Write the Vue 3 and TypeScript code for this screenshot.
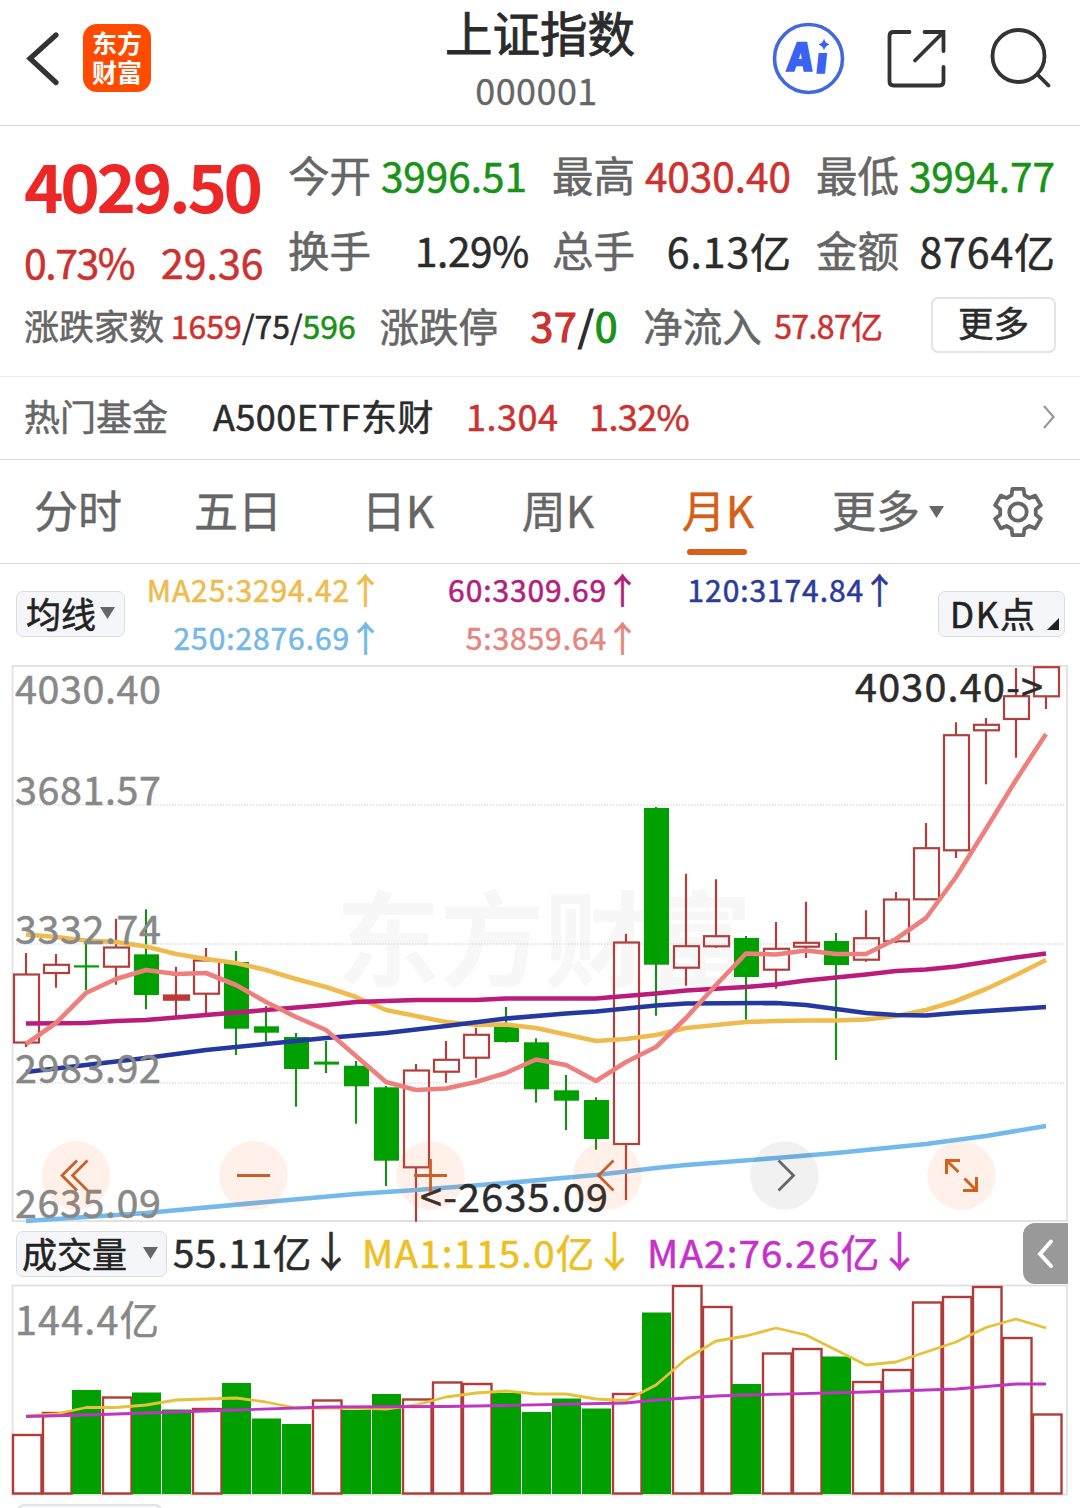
<script setup lang="ts">
interface Stat { label: string; value: string; tone: string }
type Candle = [up: number, high: number, top: number, bottom: number, low: number]

const stats: Stat[] = [
  { label: '今开', value: '3996.51', tone: 'down' },
  { label: '最高', value: '4030.40', tone: 'up' },
  { label: '最低', value: '3994.77', tone: 'down' },
  { label: '换手', value: '1.29%', tone: 'ink percent' },
  { label: '总手', value: '6.13亿', tone: 'ink amount' },
  { label: '金额', value: '8764亿', tone: 'ink amount' },
]

const tabs = ['分时', '五日', '日K', '周K', '月K']
const activeTab = '月K'

const averages = [
  { text: 'MA25:3294.42', color: '#efbb4c' },
  { text: '60:3309.69', color: '#b3207c' },
  { text: '120:3174.84', color: '#2a3b9c' },
  { text: '250:2876.69', color: '#74b8e8' },
  { text: '5:3859.64', color: '#e4857e' },
]

const cx = (i: number): number => 26 + 30 * i

const candles: Candle[] = [
  [1, 953, 974, 1042.5, 1047], [1, 954, 964.3, 973, 987.7], [0, 943, 965.3, 967.5, 990.3],
  [1, 918.7, 947, 966.7, 984.7], [0, 909.3, 954.3, 995, 1009.3], [1, 966.7, 995, 999.7, 1016.7],
  [1, 948, 960, 993.7, 1016], [0, 951, 962, 1028.7, 1055], [0, 1006, 1026.3, 1032.7, 1041.7],
  [0, 1033, 1037, 1069, 1106.7], [0, 1041, 1061.6, 1064.6, 1073], [0, 1061, 1065.7, 1086.3, 1123.7],
  [0, 1086, 1087.3, 1160.7, 1186], [1, 1064, 1070, 1167.3, 1221.7], [1, 1041, 1059.3, 1071.7, 1082.7],
  [1, 1027.7, 1034.3, 1057.7, 1077.7], [0, 1007, 1026, 1042, 1042.7], [0, 1038.3, 1042.3, 1089.3, 1102.7],
  [0, 1075, 1090.3, 1100.7, 1130], [0, 1097.3, 1100, 1139, 1149.7], [1, 933.7, 942, 1144, 1200],
  [0, 807, 808, 964.7, 1015.7], [1, 873.7, 945.7, 967.7, 985.7], [1, 879.3, 935.7, 946.3, 947.7],
  [0, 936, 938, 977, 1019.7], [1, 922, 948.3, 969.7, 988.7], [1, 901.7, 942.3, 946.7, 958],
  [0, 933, 941, 965, 1060], [1, 910.3, 937.7, 959.7, 961.7], [1, 892, 899, 941.3, 943],
  [1, 823, 847.7, 899.3, 900.3], [1, 722.3, 734.7, 850.3, 858], [1, 718, 724.3, 730.3, 784.3],
  [1, 668, 695.7, 719, 757.7], [1, 667, 666.7, 696.3, 709],
]

const priceLines = [
  { color: '#73b9ec', points: '26,1221 146,1213 266,1202 356,1194 416,1190 506,1183 596,1175 656,1168 686,1165 776,1158 836,1153 926,1144 986,1136 1046,1126' },
  { color: '#f0bb4e', points: '26,934.5 56,937 86,940.5 116,942 146,946.5 176,954 206,959 236,963 266,970 296,979 326,987 356,997 386,1010 416,1016 446,1022 476,1025 506,1024.5 536,1028 566,1034.5 596,1041 626,1039 656,1035 686,1028 716,1025 746,1022 776,1021 806,1020.5 836,1020.5 866,1019.5 896,1016 926,1010 956,1001 986,989 1016,975 1046,960' },
  { color: '#bb1b7b', points: '26,1023.5 86,1023 116,1021 146,1020 206,1015 266,1010 326,1005 356,1002 386,1001 416,1000 476,1000 506,998.5 596,998.5 626,996 656,993.5 686,990.5 746,987 776,984.5 806,980.5 836,977.5 866,974.5 896,971 926,969.5 956,966.5 986,962 1016,957.5 1046,953.5' },
  { color: '#2438a0', points: '26,1072 86,1065 146,1058 206,1050 266,1044 326,1038 386,1033 446,1026 506,1018.5 566,1013.5 596,1011.5 626,1008.5 656,1005.5 686,1003.5 776,1003 806,1005 836,1009 866,1013 896,1015 926,1015.5 956,1013 1046,1007' },
  { color: '#ed807c', points: '26,1044 56,1023 86,993 116,979 146,970 176,974 206,973 236,985 266,1002 296,1017 326,1030 356,1056 386,1082 416,1090 446,1088.5 476,1082 506,1073 536,1059.5 566,1065 596,1081 626,1062 656,1047 686,1018 716,985 746,953.5 776,954.5 806,950.5 836,954 866,954 896,939 926,918 956,877 986,829 1016,780 1046,734' },
]

const axis: [string, number][] = [
  ['4030.40', 704], ['3681.57', 805], ['3332.74', 944], ['2983.92', 1083], ['2635.09', 1218],
]

const volumes: [number, number][] = [
  [1, 1435], [1, 1413], [0, 1390], [1, 1397.5], [0, 1392.5], [0, 1409.5], [1, 1409], [0, 1383],
  [0, 1418.5], [0, 1424], [1, 1400.5], [0, 1410], [0, 1394], [1, 1399.5], [1, 1382.5], [1, 1384],
  [0, 1393], [0, 1412], [0, 1398.5], [0, 1408.5], [1, 1394], [0, 1312.5], [1, 1286], [1, 1307],
  [0, 1384], [1, 1353.5], [1, 1349], [0, 1356.5], [1, 1382], [1, 1370], [1, 1302.5], [1, 1297],
  [1, 1287], [1, 1338], [1, 1414.5],
]

const volumeLines = [
  { color: '#e6c13a', points: '26,1416 56,1414 86,1407.5 116,1407.5 146,1405 176,1400 206,1399 236,1398 266,1402 296,1408 326,1408 356,1408 386,1409 416,1405 446,1397 476,1393 506,1391 536,1394 566,1394 596,1399 626,1400.5 656,1385 686,1359 716,1341 746,1336 776,1328 806,1335 836,1350 866,1365 896,1362 926,1352 956,1342 986,1327.5 1016,1319 1046,1328' },
  { color: '#bf35c2', points: '26,1416.5 86,1415 236,1410 326,1407 446,1406.5 506,1405.5 626,1403 656,1400 716,1396 746,1395 866,1392 956,1389 1016,1384 1046,1384' },
]

const circles = [76, 253.5, 430.5, 607.5, 784.5, 961.5]

// Six-toothed gear outline around the origin.
const gear: string = Array.from({ length: 6 }, (_, k) => {
  const a = -90 + 60 * k
  return ([[18, -21], [23.8, -13.5], [23.8, 13.5], [18, 21]] as [number, number][])
    .map(([r, d]) => {
      const t = ((a + d) * Math.PI) / 180
      return `${(r * Math.cos(t)).toFixed(2)},${(r * Math.sin(t)).toFixed(2)}`
    })
    .join(' ')
}).join(' ')
</script>

<template>
  <div class="page">
    <header class="topbar">
      <svg class="back" width="34" height="60" viewBox="26 29 34 60"><path d="M56 35L30 58.500L56 82.500" fill="none" stroke="#333" stroke-width="5.200" stroke-linecap="round" /></svg>
      <div class="logo"><span>东方</span><span>财富</span></div>
      <div class="heading">
        <div class="title">上证指数</div>
        <div class="code">000001</div>
      </div>
      <svg class="tools" width="290" height="90" viewBox="768 14 290 90" fill="none" stroke="#333" stroke-width="3.800" stroke-linecap="round">
        <circle cx="808.500" cy="58.500" r="34" stroke="#4268dc" stroke-width="3.600" />
        <text class="ai" transform="translate(785.500 71) skewX(-6)" textLength="27" lengthAdjust="spacingAndGlyphs">A</text>
        <text class="ai dotless" transform="translate(815.500 73) skewX(-6)">ı</text>
        <path d="M824 38.500Q825 43 829.500 44.500Q825 46 824 50.500Q823 46 818.500 44.500Q823 43 824 38.500Z" fill="#3a62f4" stroke="none" />
        <path d="M909.500 32H893.500Q889.500 32 889.500 36V81.500Q889.500 85.500 893.500 85.500H939.500Q943.500 85.500 943.500 81.500V67M924.500 32H943.500V51M943.500 32L915 60.500" />
        <circle cx="1018.500" cy="56" r="26" />
        <path d="M1037.500 74.500L1048.500 85.500" />
      </svg>
    </header>

    <section class="quote">
      <div class="quote-main">
        <div class="last">
          <div class="price">4029.50</div>
          <div class="change"><span class="rate">0.73%</span><span>29.36</span></div>
        </div>
        <div class="stats">
          <div v-for="s in stats" :key="s.label" class="stat">
            <span class="label">{{ s.label }}</span><span :class="['value', s.tone]">{{ s.value }}</span>
          </div>
        </div>
      </div>
      <div class="breadth">
        <span class="label small">涨跌家数</span>
        <span class="counts"><i class="up">1659</i>/75/<i class="down">596</i></span>
        <span class="label mid">涨跌停</span>
        <span class="limits"><i class="up">37</i>/<i class="down">0</i></span>
        <span class="label mid">净流入</span>
        <span class="inflow up">57.87亿</span>
        <button class="more">更多</button>
      </div>
    </section>

    <section class="fund">
      <span class="fund-label">热门基金</span>
      <span class="fund-name">A500ETF东财</span>
      <span class="fund-price up">1.304</span>
      <span class="fund-change up">1.32%</span>
      <svg class="fund-arrow" width="14" height="28" viewBox="0 0 14 28"><path d="M2 3L11.500 14L2 25" fill="none" stroke="#999" stroke-width="2.200" /></svg>
    </section>

    <nav class="tabs">
      <div v-for="t in tabs" :key="t" :class="['tab', { active: t === activeTab }]">{{ t }}</div>
      <div class="tab-more">更多<svg width="15" height="12" viewBox="0 0 15 12"><path d="M0 0H15L7.500 12Z" fill="#666" /></svg></div>
      <svg class="gear" width="56" height="56" viewBox="-28 -28 56 56" fill="none" stroke="#666" stroke-width="3.800">
        <polygon :points="gear" stroke-linejoin="round" /><circle r="8.700" />
      </svg>
    </nav>

    <section class="ma">
      <div class="chip ma-chip">均线<svg width="15" height="12" viewBox="0 0 15 12"><path d="M0 0H15L7.500 12Z" fill="#666" /></svg></div>
      <div class="ma-grid">
        <span v-for="m in averages" :key="m.text" :style="{ color: m.color }">{{ m.text }}<i class="arrow">↑</i></span>
      </div>
      <div class="chip dk-chip">DK点<svg width="12" height="12" viewBox="0 0 12 12"><path d="M12 0V12H0Z" fill="#222" /></svg></div>
    </section>

    <svg class="chart" width="1080" height="560" viewBox="0 664 1080 560">
      <text class="mark" x="336" y="979" textLength="416" lengthAdjust="spacingAndGlyphs">东方财富</text>
      <g stroke="#dedede" stroke-width="1.500" stroke-dasharray="1.500 1.500">
        <path d="M13 805H1067M13 944H1067M13 1083H1067" />
      </g>
      <path d="M12.500 666H1067V1221H12.500Z" fill="none" stroke="#e2e2e2" stroke-width="1.800" />
      <g v-for="([up, high, top, bottom, low], i) in candles" :key="i">
        <template v-if="up">
          <path :d="`M${cx(i)} ${high}V${top}M${cx(i)} ${bottom}V${low}`" stroke="#b0403d" stroke-width="2.200" />
          <rect :x="cx(i) - 12" :y="top + 0.5" width="25" :height="bottom - top - 0.500" fill="none" stroke="#b0403d" stroke-width="2.200" />
        </template>
        <template v-else>
          <path :d="`M${cx(i)} ${high}V${low}`" stroke="#1c8a1c" stroke-width="2.200" />
          <rect :x="cx(i) - 12" :y="top" width="25" :height="bottom - top" fill="#00a000" />
        </template>
      </g>
      <rect x="163" y="995" width="27" height="4.800" fill="#c23734" />
      <polyline v-for="l in priceLines" :key="l.color" :points="l.points" fill="none" :stroke="l.color" stroke-width="4.600" stroke-linejoin="round" />
      <g class="axis">
        <text v-for="[label, y] in axis" :key="label" x="15" :y="y" textLength="146">{{ label }}</text>
      </g>
      <g class="extreme">
        <text x="855" y="702" textLength="188">4030.40-&gt;</text>
        <text x="420" y="1212" textLength="188">&lt;-2635.09</text>
      </g>
      <circle v-for="c in circles" :key="c" :cx="c" cy="1175.500" r="34.300" :fill="c === 784.5 ? 'rgba(0,0,0,.055)' : 'rgba(255,95,20,.095)'" />
      <g fill="none" stroke="#c8602a" stroke-width="2.800">
        <path d="M77 1160.500L62 1175.500L77 1190.500M87.500 1160.500L72.500 1175.500L87.500 1190.500" />
        <path d="M237 1175.500H270" />
        <path d="M414 1175.500H447M430.500 1159V1192" />
        <path d="M613.500 1160.500L598.500 1175.500L613.500 1190.500" />
        <path d="M778.500 1160.500L793.500 1175.500L778.500 1190.500" stroke="#666" />
        <path d="M946.500 1174V1160.500H960M947 1161L958.500 1172M976.500 1177V1190.500H963M976 1190L964.500 1178.500" stroke="#d4601c" stroke-width="3" />
      </g>
    </svg>

    <section class="vol-head">
      <div class="chip vol-chip">成交量<svg width="15" height="12" viewBox="0 0 15 12"><path d="M0 0H15L7.500 12Z" fill="#666" /></svg></div>
      <span class="v1">55.11亿<i class="arrow">↓</i></span>
      <span class="v2">MA1:115.0亿<i class="arrow">↓</i></span>
      <span class="v3">MA2:76.26亿<i class="arrow">↓</i></span>
      <div class="drawer"><svg width="20" height="32" viewBox="0 0 20 32"><path d="M15 3.500L4 16L15 28" fill="none" stroke="#fff" stroke-width="4" stroke-linecap="round" /></svg></div>
    </section>

    <svg class="chart" width="1080" height="224" viewBox="0 1284 1080 224">
      <path d="M12.500 1285.500H1067V1494.500H12.500Z" fill="none" stroke="#e2e2e2" stroke-width="1.800" />
      <template v-for="([up, top], i) in volumes" :key="i">
        <rect v-if="up" :x="13 + 30 * i" :y="top" width="28.500" :height="1493.500 - top" fill="#fff" stroke="#b03c39" stroke-width="2.400" />
        <rect v-else :x="12 + 30 * i" :y="top" width="29" :height="1494 - top" fill="#00a000" />
      </template>
      <polyline v-for="l in volumeLines" :key="l.color" :points="l.points" fill="none" :stroke="l.color" stroke-width="2.800" stroke-linejoin="round" />
      <text class="axis" x="15" y="1335" textLength="144">144.4亿</text>
      <rect x="17" y="1505" width="145" height="44" rx="7" fill="#f5f6fa" stroke="#dcdde0" stroke-width="1.500" />
    </svg>
  </div>
</template>

<style>
body { margin: 0; background: #fff; }
</style>

<style scoped>
.page { width: 1080px; height: 1508px; overflow: hidden; background: #fff; color: #2b2b2b; font-family: "Noto Sans CJK SC", sans-serif; font-weight: 400; white-space: nowrap; line-height: 1; -webkit-text-stroke: 0.55px; }
i { font-style: normal; }
svg { display: block; flex: none; }
.up { color: #cc3230; }
.down { color: #189318; }
.ink { color: #2b2b2b; }

.topbar { display: flex; height: 125px; border-bottom: 1px solid #d6d6d6; }
.back { margin: 29px 0 0 26px; }
.logo { display: flex; flex-direction: column; justify-content: center; align-items: center; width: 68px; height: 68px; margin: 24px 0 0 23px; border-radius: 14px; background: #ff4b00; color: #fff; font-weight: 700; font-size: 25px; line-height: 29px; padding-bottom: 2px; box-sizing: border-box; -webkit-text-stroke: 0; }
.heading { display: flex; flex-direction: column; align-items: center; width: 290px; margin-left: 244px; }
.title { margin-top: 2px; font-size: 47.500px; line-height: 60px; -webkit-text-stroke: 0.9px; }
.code { margin-right: 7px; font-size: 36px; line-height: 54px; letter-spacing: 0.400px; color: #666; -webkit-text-stroke: 0.3px; }
.tools { margin: 14px 0 0 83px; }
.ai { fill: #3a62f4; stroke: #3a62f4; stroke-width: 1.600; font: 900 39px Inter, sans-serif; }
.ai.dotless { font-size: 35px; }

.quote { height: 250px; border-bottom: 1px solid #ececec; padding: 0 24px; }
.quote-main { display: flex; height: 150px; padding-top: 11px; }
.last { width: 265px; padding-top: 6px; box-sizing: border-box; }
.price { height: 82px; line-height: 82px; font-size: 67px; font-weight: 700; letter-spacing: -3.300px; color: #eb2727; -webkit-text-stroke: 0; }
.change { display: flex; height: 62px; padding-top: 9px; line-height: 54px; font-size: 41px; color: #cc3230; }
.rate { width: 137px; letter-spacing: -1.500px; }
.stats { display: grid; grid-template-columns: repeat(3, 238px); grid-auto-rows: 75px; column-gap: 26px; }
.stat { display: flex; justify-content: space-between; align-items: center; height: 75px; box-sizing: border-box; padding-top: 1px; }
.label { color: #666; font-size: 41.500px; margin-left: -1px; }
.value { font-size: 40.500px; }
.percent { letter-spacing: -0.400px; margin-right: -2px; }
.amount { font-size: 41px; letter-spacing: 0.900px; margin-right: -1px; }
.breadth { display: flex; align-items: center; height: 75px; }
.label.small { width: 147px; font-size: 35px; margin-left: 0; }
.label.mid { font-size: 39.500px; width: 119px; margin-left: 0; }
.counts { width: 209px; font-size: 32px; }
.limits { width: 113px; margin-left: 32px; font-size: 41px; letter-spacing: 0.900px; -webkit-text-stroke: 1.200px; }
.inflow { width: 157px; margin-left: 12px; font-size: 32px; letter-spacing: -0.600px; }
.more { flex: none; width: 125px; height: 56px; border: 2px solid #e4e4e4; border-radius: 7px; background: #fff; padding: 0 0 5px; font: inherit; font-size: 35.500px; line-height: 1; color: #2b2b2b; }

.fund { display: flex; align-items: center; height: 76px; border-bottom: 1px solid #d6d6d6; padding: 0 0 6px 24px; font-size: 36px; }
.fund-label { width: 189px; color: #666; }
.fund-name { width: 253px; letter-spacing: 0.500px; }
.fund-price { width: 123px; letter-spacing: 0.500px; }
.fund-change { width: 453px; letter-spacing: -0.600px; }
.fund-arrow { margin-top: 4px; }

.tabs { display: flex; align-items: center; height: 103px; border-bottom: 1px solid #d6d6d6; font-size: 44px; color: #666; -webkit-text-stroke: 0.4px; }
.tab { position: relative; left: -2px; width: 160px; height: 103px; line-height: 99px; text-align: center; }
.tab.active { color: #d65f18; }
.tab.active::after { content: ""; position: absolute; left: 49px; bottom: 8px; width: 60px; height: 6px; border-radius: 3px; background: #d65f18; }
.tab-more { display: flex; align-items: center; gap: 9px; width: 158px; height: 103px; margin-left: 32px; line-height: 99px; align-items: flex-start; }
.tab-more svg { margin-top: 46px; }

.ma { display: flex; height: 100px; }
.chip { display: flex; align-items: center; box-sizing: border-box; height: 46px; border: 1.500px solid #dcdde0; border-radius: 7px; background: #f5f6fa; font-size: 35px; line-height: 1; color: #222; padding-bottom: 4px; }
.ma-chip { width: 109px; margin: 27px 0 0 16px; padding-left: 9px; gap: 4px; }
.ma-chip svg { margin-top: 2px; }
.ma-grid { display: grid; grid-template-columns: 258px 257px 257px; grid-auto-rows: 48px; width: 772px; height: 98px; margin: 2px 0 0 -4px; font-size: 30px; letter-spacing: 0.900px; }
.ma-grid span { display: flex; justify-content: flex-end; height: 48px; line-height: 46px; }
.ma-grid .arrow { width: 35px; margin: 0 -4px 0 -2px; font-size: 35px; letter-spacing: 0; }
.dk-chip { width: 127px; margin: 27px 0 0 45px; padding-left: 11px; gap: 10px; letter-spacing: 1.600px; }
.dk-chip svg { margin-top: 24px; }

.chart { overflow: visible; -webkit-text-stroke: 0; }
.chart text { font-family: "Noto Sans CJK SC", sans-serif; }
.chart .mark { font-size: 104px; font-weight: 700; fill: #f7f7f7; }
.axis { font-size: 39.500px; fill: #888; stroke: #888; stroke-width: 0.500px; }
.extreme { font-size: 39.500px; fill: #2b2b2b; stroke: #2b2b2b; stroke-width: 0.500px; }

.vol-head { display: flex; align-items: flex-start; height: 60px; font-size: 38.500px; line-height: 54px; }
.vol-chip { width: 151px; margin: 7px 6px 0 16px; padding-left: 5px; gap: 16px; }
.vol-chip svg { margin-top: 2px; }
.vol-head .arrow { display: inline-block; width: 42px; margin-left: -2px; font-size: 42px; line-height: 50px; letter-spacing: 0; vertical-align: top; }
.v1 { width: 189px; letter-spacing: 0.700px; }
.v2 { width: 285px; letter-spacing: 1.200px; color: #edc022; }
.v3 { width: 376px; letter-spacing: 1.200px; color: #c531c9; }
.drawer { display: flex; align-items: center; justify-content: center; flex: none; width: 45px; height: 61px; margin-top: -1px; border-radius: 12px 0 0 12px; background: #999; }
</style>
